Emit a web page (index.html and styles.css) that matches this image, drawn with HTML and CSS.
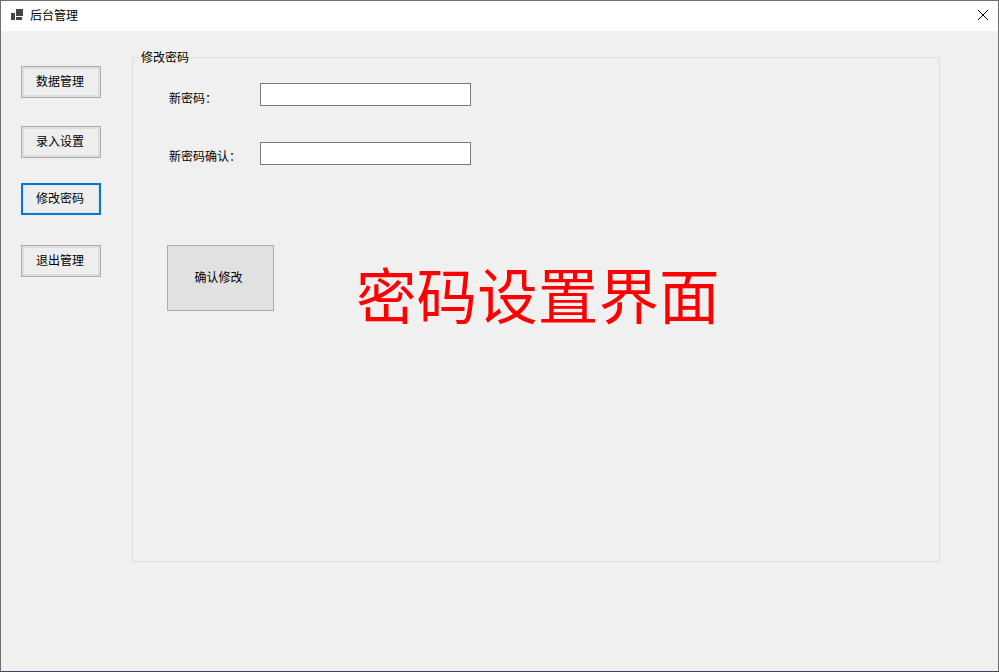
FILE: index.html
```html
<!DOCTYPE html>
<html lang="zh-CN">
<head>
    <meta charset="UTF-8">
    <meta name="viewport" content="width=device-width, initial-scale=1.0">
    <title>后台管理</title>
    <link rel="stylesheet" href="styles.css">
</head>
<body>
    <div class="window">
        <div class="titlebar">
            <svg class="app-icon" width="12" height="12" viewBox="0 0 12 12">
                <rect x="0" y="4" width="4" height="7" fill="#444"/>
                <rect x="5" y="0" width="7" height="7" fill="#444"/>
                <rect x="5" y="8" width="6" height="3" fill="#444"/>
            </svg>
            <span class="title">后台管理</span>
            <svg class="close" width="11" height="12" viewBox="0 0 11 12">
                <path d="M1 1 L11 11 M11 1 L1 11" stroke="#000" stroke-width="1" fill="none"/>
            </svg>
        </div>
        <div class="client">
            <div class="sidebar">
                <button class="nav-btn">数据管理</button>
                <button class="nav-btn">录入设置</button>
                <button class="nav-btn focused">修改密码</button>
                <button class="nav-btn">退出管理</button>
            </div>
            <fieldset class="group">
                <legend>修改密码</legend>
                <div class="group-body">
                    <div class="field first">
                        <label>新密码：</label>
                        <input type="password">
                    </div>
                    <div class="field">
                        <label>新密码确认：</label>
                        <input type="password">
                    </div>
                    <div class="actions">
                        <button class="confirm">确认修改</button>
                        <div class="caption">密码设置界面</div>
                    </div>
                </div>
            </fieldset>
        </div>
    </div>
</body>
</html>
```

FILE: styles.css
```css
* {
    box-sizing: border-box;
}
body {
    margin: 0;
    font-family: "Noto Sans CJK SC", "Liberation Sans", sans-serif;
    font-size: 12px;
    color: #000;
    background-color: #f0f0f0;
}
.window {
    width: 999px;
    height: 672px;
    border: 1px solid #6f6f6f;
    border-bottom-color: #2f4a63;
    background-color: #f0f0f0;
    display: flex;
    flex-direction: column;
}
.titlebar {
    height: 30px;
    background-color: #fff;
    display: flex;
    align-items: center;
    padding: 0 10px;
}
.app-icon {
    margin-right: 7px;
    margin-top: -2px;
}
.title {
    flex: 1;
    line-height: 16px;
    margin-top: -2px;
}
.close {
    margin-top: -2px;
}
.client {
    flex: 1;
    display: flex;
    align-items: flex-start;
    padding: 18px 0 0 20px;
}
.sidebar {
    width: 80px;
    margin-right: 31px;
    padding-top: 17px;
    display: flex;
    flex-direction: column;
}
button {
    font-family: inherit;
    font-size: 12px;
    color: #000;
    padding: 0;
    cursor: pointer;
}
.nav-btn {
    height: 32px;
    padding: 0 2px 3px 0;
    background-color: #eeeeee;
    border: 1px solid #adadad;
    box-shadow: inset 0 0 0 2px #dedede;
    margin-bottom: 28px;
}
.nav-btn:nth-child(2) {
    margin-bottom: 25px;
}
.nav-btn:nth-child(3) {
    margin-bottom: 30px;
}
.focused {
    border: 2px solid #0078d7;
    box-shadow: inset 0 0 0 1px #e4e4e4;
}
.group {
    width: 808px;
    height: 513px;
    margin: 0;
    padding: 0;
    border: 1px solid #dcdcdc;
}
legend {
    margin-left: 7px;
    padding: 0 1px;
    line-height: 16px;
}
.group-body {
    padding-left: 36px;
}
.field {
    display: flex;
    height: 23px;
    margin-top: 36px;
}
.field.first {
    margin-top: 18px;
}
.field label {
    width: 91px;
    padding-top: 6px;
    line-height: 16px;
}
.field.first label {
    padding-top: 7px;
}
.field input {
    width: 211px;
    height: 23px;
    border: 1px solid #7a7a7a;
    background-color: #fff;
    outline: none;
}
.actions {
    display: flex;
    align-items: flex-start;
    margin-top: 80px;
    margin-left: -2px;
}
.confirm {
    width: 107px;
    height: 66px;
    padding: 0 4px 3px 0;
    background-color: #e1e1e1;
    border: 1px solid #adadad;
}
.caption {
    margin-left: 82px;
    margin-top: 13px;
    color: #ff0000;
    font-size: 60.6px;
    line-height: 70px;
}
```
